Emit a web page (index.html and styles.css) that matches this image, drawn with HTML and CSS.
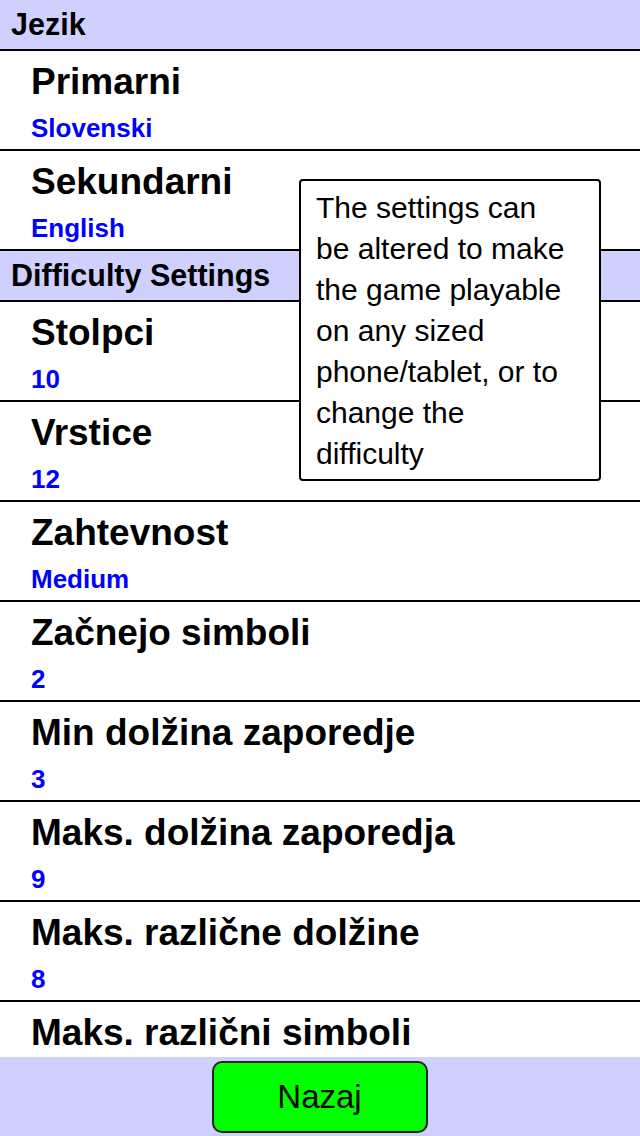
FILE: index.html
```html
<!DOCTYPE html>
<html lang="sl">

<head>
    <meta charset="UTF-8">
    <meta name="viewport" content="width=device-width, initial-scale=1.0">
    <title>Settings</title>
    <link rel="stylesheet" href="styles.css">
</head>

<body>
    <div class="screen">
        <!-- Settings list -->
        <div class="settings">
            <div class="section-head">Jezik</div>
            <div class="setting">
                <div class="setting-title">Primarni</div>
                <div class="setting-value">Slovenski</div>
            </div>
            <div class="setting">
                <div class="setting-title">Sekundarni</div>
                <div class="setting-value">English</div>
            </div>

            <div class="section-head">Difficulty Settings</div>
            <div class="setting">
                <div class="setting-title">Stolpci</div>
                <div class="setting-value">10</div>
            </div>
            <div class="setting">
                <div class="setting-title">Vrstice</div>
                <div class="setting-value">12</div>
            </div>
            <div class="setting">
                <div class="setting-title">Zahtevnost</div>
                <div class="setting-value">Medium</div>
            </div>
            <div class="setting">
                <div class="setting-title">Začnejo simboli</div>
                <div class="setting-value">2</div>
            </div>
            <div class="setting">
                <div class="setting-title">Min dolžina zaporedje</div>
                <div class="setting-value">3</div>
            </div>
            <div class="setting">
                <div class="setting-title">Maks. dolžina zaporedja</div>
                <div class="setting-value">9</div>
            </div>
            <div class="setting">
                <div class="setting-title">Maks. različne dolžine</div>
                <div class="setting-value">8</div>
            </div>
            <!-- last row is scrolled past the bottom bar -->
            <div class="setting">
                <div class="setting-title">Maks. različni simboli</div>
            </div>
        </div>

        <!-- Bottom bar -->
        <div class="footer">
            <button class="back-btn">Nazaj</button>
        </div>

        <!-- Help popup -->
        <div class="tip">
            <p>The settings can be altered to make the game playable on any sized phone/tablet, or to change the difficulty</p>
        </div>
    </div>
</body>

</html>
```

FILE: styles.css
```css
body {
    font-family: 'Liberation Sans', Arial, sans-serif;
    background-color: #fff;
    color: #000;
    margin: 0;
    padding: 0;
}

.screen {
    position: relative;
    width: 640px;
    height: 1136px;
    display: flex;
    flex-direction: column;
    overflow: hidden;
}

.settings {
    flex: 1;
    overflow: hidden;
}

.section-head {
    height: 49px;
    line-height: 49px;
    padding-left: 11px;
    background-color: #d0d0ff;
    border-bottom: 2px solid #000;
    font-size: 30.5px;
    font-weight: bold;
}

.setting {
    height: 88px;
    padding: 10px 0 0 31px;
    border-bottom: 2px solid #000;
}

.setting-title {
    font-size: 37px;
    font-weight: bold;
    line-height: 42px;
}

.setting-value {
    margin-top: 9px;
    font-size: 26px;
    font-weight: bold;
    line-height: 32px;
    color: #0000ff;
}

.footer {
    height: 79px;
    flex-shrink: 0;
    display: flex;
    justify-content: center;
    align-items: center;
    background-color: #d0d0ff;
}

.back-btn {
    width: 216px;
    height: 72px;
    margin-left: -1px;
    background-color: #00ff00;
    border: 2px solid #222;
    border-radius: 10px;
    font-family: 'Liberation Sans', Arial, sans-serif;
    font-size: 33px;
    color: #000;
    cursor: pointer;
}

/* Help popup over the list */
.tip {
    position: absolute;
    left: 299px;
    top: 179px;
    width: 302px;
    height: 302px;
    box-sizing: border-box;
    padding: 6px 0 0 15px;
    background-color: #fff;
    border: 2px solid #000;
    border-radius: 4px;
}

.tip p {
    margin: 0;
    width: 256px;
    font-size: 30px;
    line-height: 41px;
}
```
